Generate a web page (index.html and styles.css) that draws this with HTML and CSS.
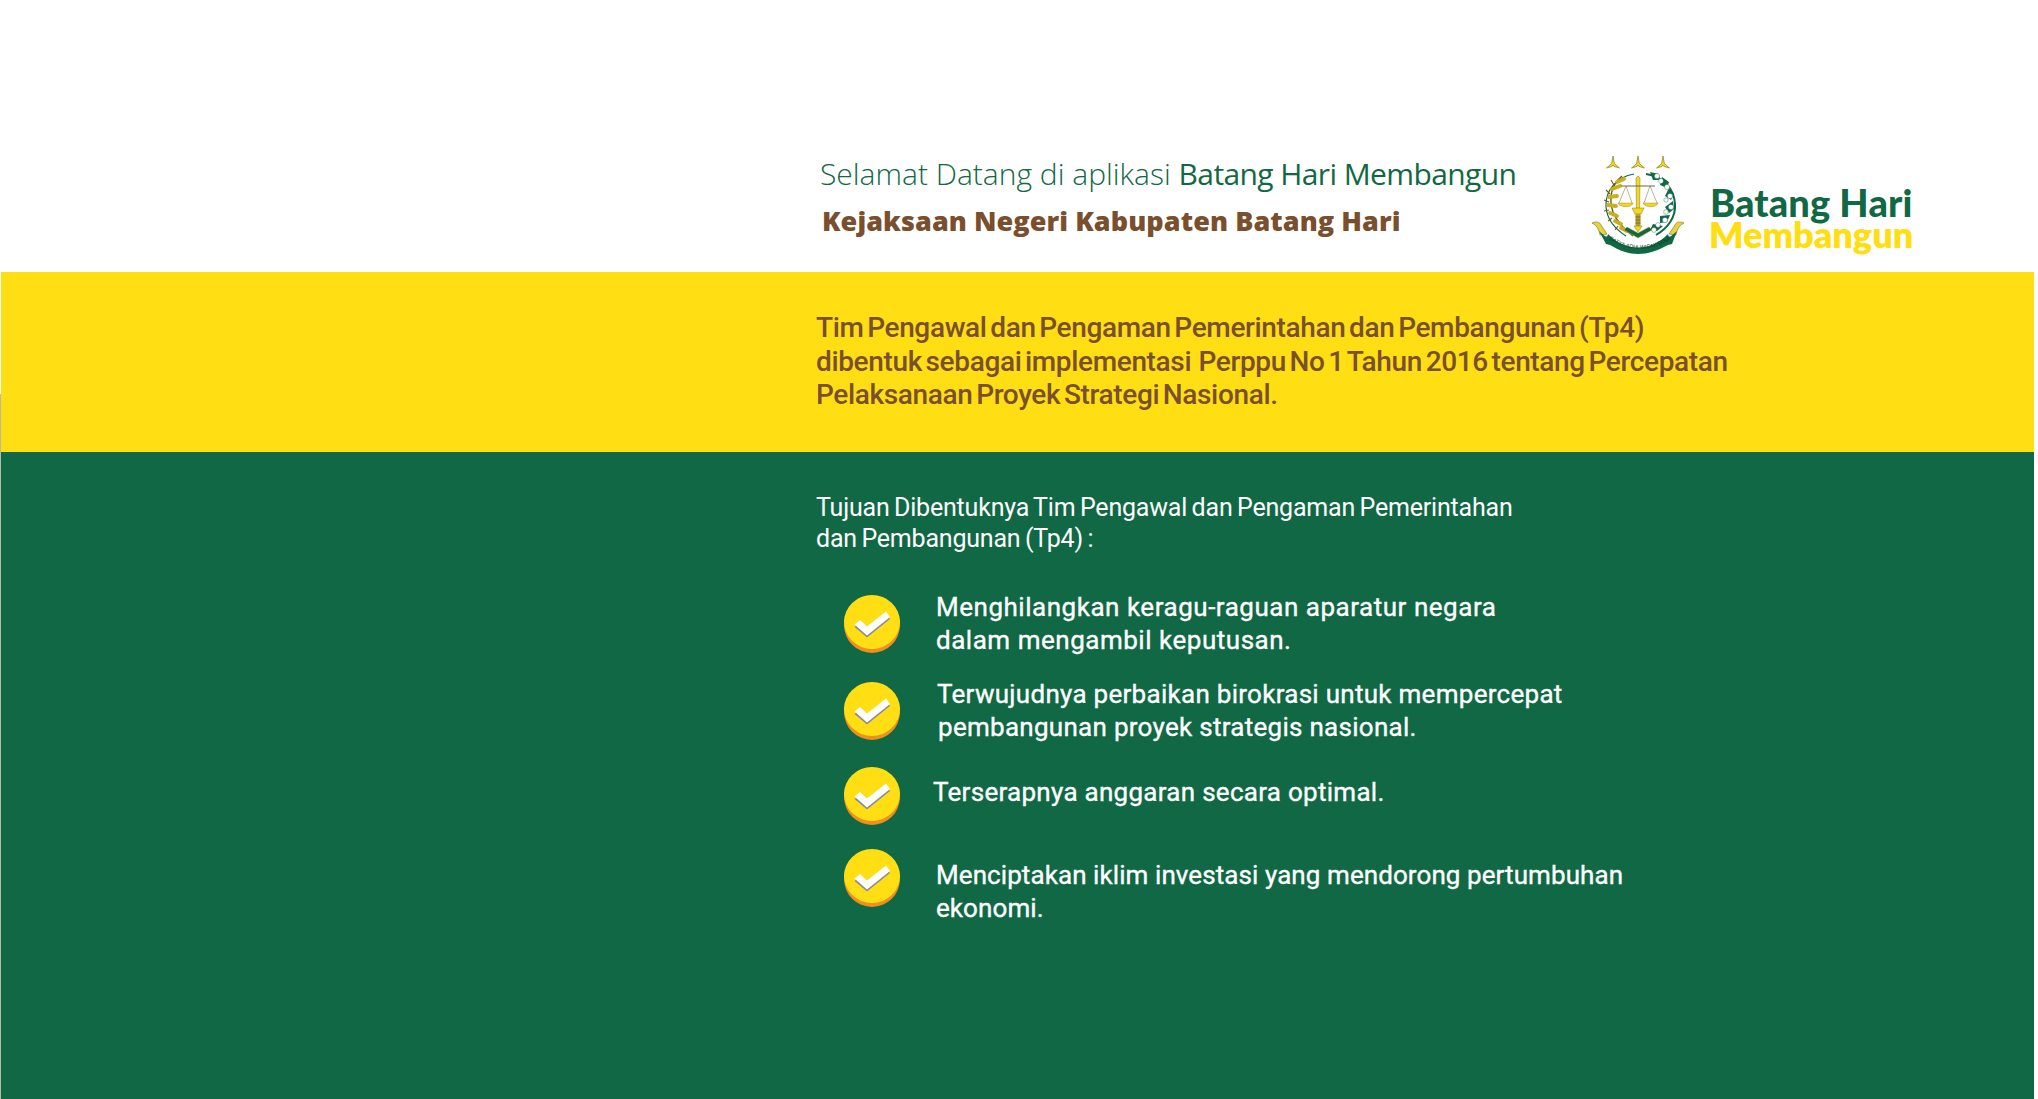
FILE: index.html
```html
<!DOCTYPE html>
<html lang="id">
<head>
<meta charset="utf-8">
<title>Batang Hari Membangun</title>
<link rel="stylesheet" href="styles.css">
</head>
<body>
<div class="page">
  <header class="top">
    <div class="welcome">
      <h1 class="title">Selamat Datang di aplikasi <span class="title-strong">Batang Hari Membangun</span></h1>
      <p class="subtitle">Kejaksaan Negeri Kabupaten Batang Hari</p>
    </div>
    <div class="brand">
      <svg class="crest" viewBox="0 0 110 110" width="110" height="110" aria-label="Lambang Kejaksaan">
        <defs>
          <path id="blade" d="M0-6 L1.4 1.5 L6.500 6 L1 4.500 L0 3 L-1 4.500 L-6.500 6 L-1.400 1.500Z"/>
          <path id="ribbon-arc" d="M14 86 Q50 112 86 86"/>
        </defs>
        <g fill="#f4d81c" stroke="#6f6f20" stroke-width=".6">
          <use href="#blade" x="23" y="12"/><use href="#blade" x="48" y="12"/><use href="#blade" x="73" y="12"/>
        </g>
        <path d="M44 24C26 27 15 41 16 57c1 12 9 22 20 29" fill="none" stroke="#116845" stroke-width="1.200"/>
        <path d="M32 26C20 36 19 50 23 62c4 10 12 18 20 24" fill="none" stroke="#6a5c14" stroke-width="1.400"/>
        <g stroke="#c9ae1f" stroke-width="3.800" stroke-linecap="round">
          <path d="M27 32l7-3M22 39l8-3M19 47l8-1M18 55l8 1M20 63l7 3M25 71l6 3M31 78l6 3"/>
        </g>
        <g stroke="#6a5c14" stroke-width="1.100">
          <path d="M24 35l-3-5M20 44l-4-4M19 52l-5-2M19 60l-5 1M22 68l-4 3M28 76l-3 4"/>
        </g>
        <path d="M56 24c16 2 28 14 29 30 1 13-7 24-19 31" fill="none" stroke="#116845" stroke-width="2"/>
        <g fill="#116845">
          <path d="M60 22l9 2 1 6-7 0zM72 27l7 5-2 6-7-3zM79 38l5 6-3 6-6-4zM83 51l1 8-5 4-4-6zM80 65l-3 7-7 1 0-7zM73 76l-6 5-7-1 3-6z"/>
        </g>
        <g fill="#fff" stroke="#116845" stroke-width=".4">
          <circle cx="67" cy="26" r="2.6"/><circle cx="71" cy="31" r="2.4"/><circle cx="77" cy="37" r="2.6"/><circle cx="80" cy="46" r="2.6"/><circle cx="76" cy="50" r="2.2"/><circle cx="81" cy="57" r="2.6"/><circle cx="76" cy="62" r="2.4"/><circle cx="75" cy="70" r="2.6"/><circle cx="68" cy="75" r="2.4"/><circle cx="64" cy="80" r="2.4"/>
        </g>
        <path d="M48 26 L50 28 L49.600 60 L46.400 60 L46 28Z" fill="#f4d81c" stroke="#7f7a20" stroke-width=".5"/>
        <path d="M42 58h12l-3 6h-6z" fill="#f4d81c" stroke="#7f7a20" stroke-width=".5"/>
        <rect x="45.500" y="64" width="5" height="12" fill="#b79f2a"/>
        <path d="M45.500 67h5M45.500 70h5M45.500 73h5" stroke="#6f6420" stroke-width=".9"/>
        <path d="M44 76h8l-4 6z" fill="#f4d81c" stroke="#7f7a20" stroke-width=".5"/>
        <path d="M31 36h34" stroke="#6e6a3a" stroke-width="1.100"/>
        <path d="M36 36l-7 17M36 36l6 17M60 36l-6 17M60 36l7 17" stroke="#6e6a3a" stroke-width=".5" fill="none"/>
        <path d="M28 53h15c-1 5-13 5-15 0zM53 53h15c-1 5-13 5-15 0z" fill="#f2d51f" stroke="#8a7f25" stroke-width=".4"/>
        <path d="M2 73c4-2 8-1 9 2l6 9-7 1C9 81 8 76 2 73zM94 73c-4-2-8-1-9 2l-6 9 7 1c1-4 2-9 8-12z" fill="#e9d23a" stroke="#575b18" stroke-width=".5"/>
        <path d="M9 81c6 5 8 8 9 3 18 18 42 18 60 0 1 5 3 2 9-3l-5 13-4 1C56 107 40 107 20 95l-4-1z" fill="#116845"/>
        <path d="M34 80l14 8 14-8-3-3-11 6-11-6z" fill="#116845" stroke="#c9ae1f" stroke-width=".5"/>
        <text class="crest-motto"><textPath href="#ribbon-arc" startOffset="50%" text-anchor="middle">SATYA ADHI WICAKSANA</textPath></text>
      </svg>
      <div class="brand-name">
        <span class="brand-top">Batang Hari</span>
        <span class="brand-bottom">Membangun</span>
      </div>
    </div>
  </header>

  <section class="band band-yellow">
    <p class="intro">Tim Pengawal dan Pengaman Pemerintahan dan Pembangunan (Tp4)<br>dibentuk sebagai implementasi&nbsp; Perppu No 1 Tahun 2016 tentang Percepatan<br>Pelaksanaan Proyek Strategi Nasional.</p>
  </section>

  <section class="band band-green">
    <p class="lead">Tujuan Dibentuknya Tim Pengawal dan Pengaman Pemerintahan<br>dan Pembangunan (Tp4) :</p>
    <ul class="goals">
      <li class="goal goal-one">
        <svg class="check" viewBox="0 0 56 58" width="56" height="58"><use href="#tick"/></svg>
        <span class="goal-text">Menghilangkan keragu-raguan aparatur negara<br>dalam mengambil keputusan.</span>
      </li>
      <li class="goal goal-two">
        <svg class="check" viewBox="0 0 56 58" width="56" height="58"><use href="#tick"/></svg>
        <span class="goal-text">Terwujudnya perbaikan birokrasi untuk mempercepat<br><span class="nudge">pembangunan proyek strategis nasional.</span></span>
      </li>
      <li class="goal goal-three">
        <svg class="check" viewBox="0 0 56 58" width="56" height="58"><use href="#tick"/></svg>
        <span class="goal-text">Terserapnya anggaran secara optimal.</span>
      </li>
      <li class="goal goal-four">
        <svg class="check" viewBox="0 0 56 58" width="56" height="58"><use href="#tick"/></svg>
        <span class="goal-text">Menciptakan iklim investasi yang mendorong pertumbuhan<br>ekonomi.</span>
      </li>
    </ul>
  </section>
</div>
<svg class="defs" width="0" height="0" aria-hidden="true">
  <defs>
    <g id="tick">
      <ellipse cx="28" cy="30" rx="28" ry="28" fill="#ee8f1f"/>
      <ellipse cx="28" cy="27" rx="28" ry="27" fill="#ffde14"/>
      <path d="M10.500 32l5.500-4.500 7 6.500 19-15.500 4 5.500-23 18.500z" fill="#8d8d8d"/>
      <path d="M10.500 29.500l5.500-4.500 7 6.500 19-15 4 5.500-23 18.500z" fill="#fff"/>
    </g>
  </defs>
</svg>
</body>
</html>
```

FILE: styles.css
```css
html, body {
  margin: 0;
  padding: 0;
  background: #fff;
}

.page {
  width: 2038px;
  height: 1099px;
  display: flex;
  flex-direction: column;
  overflow: hidden;
  background: linear-gradient(#fff 394px, #b9b9a8 394px) no-repeat 0 0 / 1px 100%;
}

.top {
  height: 272px;
  display: flex;
  padding-left: 820px;
  box-sizing: border-box;
}

.welcome {
  width: 770px;
  padding-top: 152px;
  box-sizing: border-box;
}

.title {
  margin: 0;
  font-family: "Open Sans", sans-serif;
  font-weight: 300;
  font-size: 30px;
  line-height: 44px;
  color: #116845;
  white-space: nowrap;
}

.title-strong {
  font-weight: 400;
  letter-spacing: -0.6px;
}

.subtitle {
  margin: 6px 0 0 2px;
  font-family: "Open Sans", sans-serif;
  font-weight: 800;
  font-size: 27px;
  line-height: 38px;
  letter-spacing: 0.07px;
  color: #7a4f2e;
  white-space: nowrap;
}

.brand {
  display: flex;
  align-items: flex-start;
  padding-top: 150px;
}

.crest {
  flex: none;
  display: block;
}

.crest-motto {
  font-family: "Liberation Sans", sans-serif;
  font-size: 5.5px;
  fill: #0b3a26;
}

.brand-name {
  display: flex;
  flex-direction: column;
  margin: 36px 0 0 10px;
  font-family: "Lato", sans-serif;
  font-weight: 900;
  font-size: 38px;
  line-height: 32px;
  white-space: nowrap;
}

.brand-top {
  color: #116845;
  letter-spacing: 0.1px;
}

.brand-bottom {
  color: #ffde14;
  font-size: 36px;
  font-weight: 800;
  margin-left: -1px;
}

.band {
  margin-left: 1px;
  width: 2033px;
  box-sizing: border-box;
  padding-left: 815px;
}

.band-yellow {
  height: 180px;
  background: #ffde14;
  padding-top: 39px;
}

.intro {
  margin: 0;
  font-family: "Roboto", sans-serif;
  font-weight: 500;
  font-size: 28px;
  line-height: 33.7px;
  letter-spacing: -0.35px;
  word-spacing: -3px;
  color: #7a4f2e;
  white-space: nowrap;
}

.band-green {
  flex: 1;
  background: #116845;
  padding-top: 40px;
  color: #fff;
}

.lead {
  margin: 0;
  font-family: "Roboto", sans-serif;
  font-weight: 400;
  font-size: 25px;
  line-height: 31px;
  letter-spacing: -0.2px;
  word-spacing: -1.5px;
  white-space: nowrap;
}

.goals {
  list-style: none;
  margin: 0;
  padding: 0 0 0 28px;
}

.goal {
  display: flex;
  align-items: flex-start;
  gap: 36px;
}

.goal-one { margin-top: 36px; }
.goal-two { margin-top: 21px; }
.goal-three { margin-top: 23px; }
.goal-four { margin-top: 24px; }

.check {
  flex: none;
  display: block;
}

.goal-text {
  font-family: "Roboto", sans-serif;
  font-weight: 400;
  font-size: 26px;
  line-height: 33px;
  letter-spacing: 0.28px;
  -webkit-text-stroke: 0.35px #fff;
  white-space: nowrap;
}

.goal-one .check { margin-top: 5px; }
.goal-one .goal-text { margin-top: 1px; letter-spacing: 0.52px; }
.goal-two .check { margin-top: 4px; }
.goal-two .goal-text { margin-left: 1px; }
.goal-three .goal-text { margin: 9px 0 0 -3px; }
.goal-four .goal-text { margin-top: 10px; letter-spacing: 0.08px; }

.nudge {
  margin-left: 1px;
}

.defs {
  position: absolute;
}
```
